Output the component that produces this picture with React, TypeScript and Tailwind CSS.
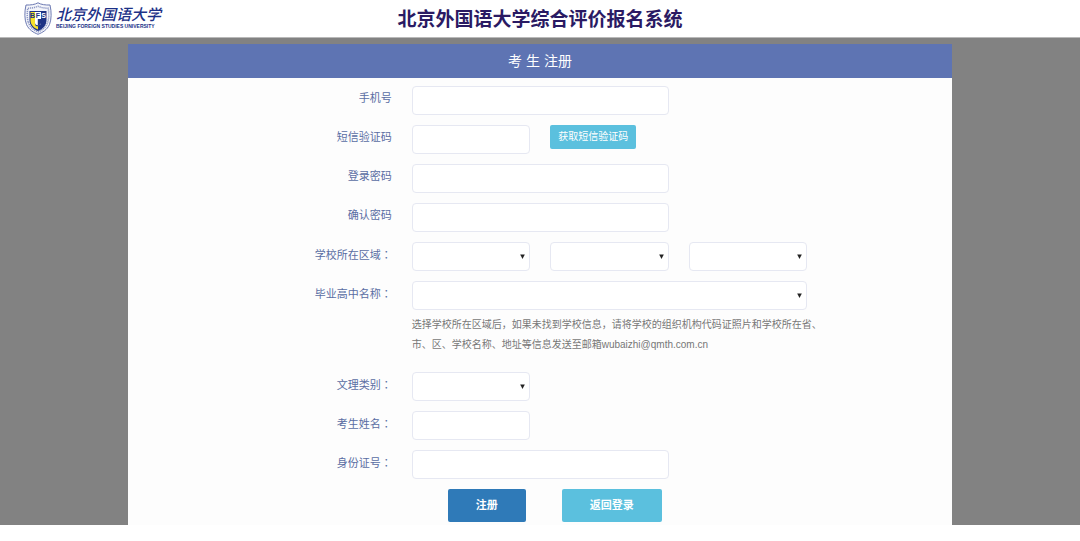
import React from 'react';

const inputStyle =
  'block w-full h-[29px] px-2 bg-white border border-[#e6e8f2] rounded-sm text-[11px] text-gray-700 outline-none focus:border-[#5e74b3]';

const Crest: React.FC = () => (
  <svg width="28" height="33" viewBox="0 0 28 33" aria-hidden="true" className="shrink-0">
    <path
      d="M14 .8 C17 2.600 21.500 3.200 26 3 C27.600 10 27.600 17 25.500 22.500 C23 28 18.500 30.500 14 32.300 C9.500 30.500 5 28 2.500 22.500 C.4 17 .4 10 2 3 C6.500 3.200 11 2.600 14 .8Z"
      fill="#f4f5fa"
      stroke="#6c79b2"
      strokeWidth="1"
    />
    <path
      d="M5.500 27 M4.200 20 C3 16 3 11 3.800 6.200 C7.500 6.200 11 5.500 14 4.200 C17 5.500 20.500 6.200 24.200 6.200 C25 11 25 16 23.800 20 C22.300 25 18.500 28 14 29.900 C9.500 28 5.700 25 4.200 20Z"
      fill="none"
      stroke="#8c97c4"
      strokeWidth="1.500"
      strokeDasharray="1.200 .8"
    />
    <path d="M5.500 9 H22.500 V18 C22.500 23.500 19 27 14 29 C9 27 5.500 23.500 5.500 18Z" fill="#1d3384" />
    <path d="M6.500 10 H11 V22 C11 23.500 12.300 24.300 14 24.300 V27.500 C9.500 25.700 6.500 22.500 6.500 18Z" fill="#f5e02b" />
    <path d="M11 10 H17 V21 C17 22.500 15.700 23.200 14 23.200 C12.300 23.200 11 22.500 11 21Z" fill="#fff" />
    <path d="M13.800 17 H17 V21 C17 22.500 15.500 23.200 13.800 23.200Z" fill="#1d3384" />
    <g fontFamily="Liberation Sans, sans-serif" fontSize="7" fontWeight="700" textAnchor="middle">
      <text x="8.600" y="16" fill="#1d3384">B</text>
      <text x="14" y="16" fill="#1d3384">F</text>
      <text x="19.600" y="16" fill="#fff">S</text>
    </g>
  </svg>
);

const Header: React.FC = () => (
  <header className="grid grid-cols-[1fr_auto_1fr] items-center h-[38px] px-6 bg-white border-b border-[#b9b9b9]">
    <a href="#" className="flex items-center gap-1 text-[#1c3187]">
      <Crest />
      <span className="flex flex-col whitespace-nowrap">
        <span className="text-[15px] leading-4 font-medium italic">北京外国语大学</span>
        <span className="text-[5px] leading-[7px] font-bold">BEIJING FOREIGN STUDIES UNIVERSITY</span>
      </span>
    </a>
    <h1 className="pt-0.5 text-[19px] leading-6 font-bold text-[#2a1a63] whitespace-nowrap">北京外国语大学综合评价报名系统</h1>
  </header>
);

interface RowProps {
  label: string;
  htmlFor: string;
  colon?: boolean;
  children: React.ReactNode;
}

const Row: React.FC<RowProps> = ({ label, htmlFor, colon, children }) => (
  <div className="grid grid-cols-[32%_48%] gap-x-5">
    <label htmlFor={htmlFor} className="h-[29px] text-right text-[11px] leading-[25px] text-[#5a6da3]">
      {label}
      {colon && <span className="font-['Noto_Sans_CJK_TC',sans-serif]" lang="zh-TW">：</span>}
    </label>
    <div className="grid grid-cols-3 gap-x-5">{children}</div>
  </div>
);

interface SelectProps {
  id: string;
  label?: string;
  wide?: boolean;
}

const Select: React.FC<SelectProps> = ({ id, label, wide }) => (
  <div className={`relative ${wide ? 'col-span-3' : ''}`}>
    <select id={id} aria-label={label} className={`${inputStyle} appearance-none pr-5`}>
      <option value=""></option>
    </select>
    <svg width="5" height="5" viewBox="0 0 5 5" className="absolute right-[5px] top-3 pointer-events-none" aria-hidden="true">
      <path d="M.2 .5 H4.800 L2.500 5Z" fill="#222" />
    </svg>
  </div>
);

const App: React.FC = () => {
  return (
    <div className="bg-white font-['Liberation_Sans','Noto_Sans_CJK_SC',sans-serif]">
      <Header />

      <main className="flex justify-center pt-1.5 bg-[#828282]">
        {/* O painel passa um pouco do fundo cinza */}
        <section className="w-[76.3%] -mb-4 bg-[#fdfdfd]">
          <h2 className="h-[34px] text-center text-[14px] leading-[34px] text-white bg-[#5e74b3]">考 生 注册</h2>

          <form className="pt-2 pb-[19px]" onSubmit={e => e.preventDefault()}>
            <div className="flex flex-col gap-2.5">
              <Row label="手机号" htmlFor="phone">
                <input id="phone" type="tel" className={`${inputStyle} col-span-2`} />
              </Row>
              <Row label="短信验证码" htmlFor="smsCode">
                <input id="smsCode" type="text" className={inputStyle} />
                <button
                  type="button"
                  className="justify-self-start h-6 px-2 rounded-xs bg-[#5bc0de] text-[10px] leading-6 text-white whitespace-nowrap"
                >
                  获取短信验证码
                </button>
              </Row>
              <Row label="登录密码" htmlFor="password">
                <input id="password" type="password" className={`${inputStyle} col-span-2`} />
              </Row>
              <Row label="确认密码" htmlFor="confirm">
                <input id="confirm" type="password" className={`${inputStyle} col-span-2`} />
              </Row>
              <Row label="学校所在区域" htmlFor="province" colon>
                <Select id="province" />
                <Select id="city" label="市" />
                <Select id="district" label="区" />
              </Row>
              <Row label="毕业高中名称" htmlFor="school" colon>
                <Select id="school" wide />
                <p className="col-span-3 pt-[5px] pb-[7px] text-[10px] leading-5 text-[#777] whitespace-nowrap">
                  选择学校所在区域后，如果未找到学校信息，请将学校的组织机构代码证照片和学校所在省、
                  <br />
                  市、区、学校名称、地址等信息发送至邮箱wubaizhi@qmth.com.cn
                </p>
              </Row>
              <Row label="文理类别" htmlFor="subject" colon>
                <Select id="subject" />
              </Row>
              <Row label="考生姓名" htmlFor="name" colon>
                <input id="name" type="text" className={inputStyle} />
              </Row>
              <Row label="身份证号" htmlFor="idCard" colon>
                <input id="idCard" type="text" className={`${inputStyle} col-span-2`} />
              </Row>
            </div>

            <div className="grid grid-cols-[32%_48%] gap-x-5 mt-2.5">
              <div className="col-start-2 flex gap-9 pl-9">
                <button type="submit" className="h-[33px] px-7 rounded-xs bg-[#2f7ab8] text-[11px] font-bold text-white">
                  注册
                </button>
                <button type="button" className="h-[33px] px-7 rounded-xs bg-[#5bc0de] text-[11px] font-bold text-white">
                  返回登录
                </button>
              </div>
            </div>
          </form>
        </section>
      </main>
    </div>
  );
};

export default App;
